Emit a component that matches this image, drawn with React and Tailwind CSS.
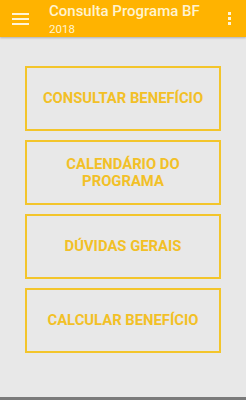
import React from "react";

const items = [
  ["CONSULTAR BENEFÍCIO"],
  ["CALENDÁRIO DO", "PROGRAMA"],
  ["DÚVIDAS GERAIS"],
  ["CALCULAR BENEFÍCIO"],
];

const App = () => {
  return (
    <div className="h-[400px] w-[246px] flex flex-col bg-[#e8e8e8] font-['Roboto',sans-serif] overflow-hidden">
      {/* toolbar */}
      <div className="h-[37px] shrink-0 bg-[#ffb300] flex items-center shadow-[0_1px_2px_rgba(0,0,0,0.25)]">
        <div className="w-[49px] flex justify-center pr-[10px] pl-[1px]">
          <div className="flex flex-col gap-[3px]">
            <span className="block w-[17px] h-[2px] bg-[#fff4d6]" />
            <span className="block w-[17px] h-[2px] bg-[#fff4d6]" />
            <span className="block w-[17px] h-[2px] bg-[#fff4d6]" />
          </div>
        </div>
        <div className="flex-1 flex flex-col leading-none mt-[2px]">
          <span className="text-[15px] font-medium text-[#fff3d0]">Consulta Programa BF</span>
          <span className="text-[11.5px] text-[#fff3d0] mt-[5px]">2018</span>
        </div>
        <div className="w-[32px] flex flex-col items-center gap-[2px] pr-[2px]">
          <span className="block w-[3px] h-[3px] bg-[#fff4d6]" />
          <span className="block w-[3px] h-[3px] bg-[#fff4d6]" />
          <span className="block w-[3px] h-[3px] bg-[#fff4d6]" />
        </div>
      </div>

      {/* menu */}
      <div className="flex-1 flex flex-col gap-[9px] px-[25px] pt-[29px]">
        {items.map((lines, i) => (
          <div
            key={i}
            className="h-[65px] border-2 border-[#f3c52b] flex flex-col items-center justify-center text-[14.8px] font-bold text-[#f2c027] leading-[17px] text-center"
          >
            {lines.map((l) => (
              <span key={l}>{l}</span>
            ))}
          </div>
        ))}
      </div>

      <div className="h-[3px] shrink-0 bg-[#7a7a7a]" />
    </div>
  );
};

export default App;
